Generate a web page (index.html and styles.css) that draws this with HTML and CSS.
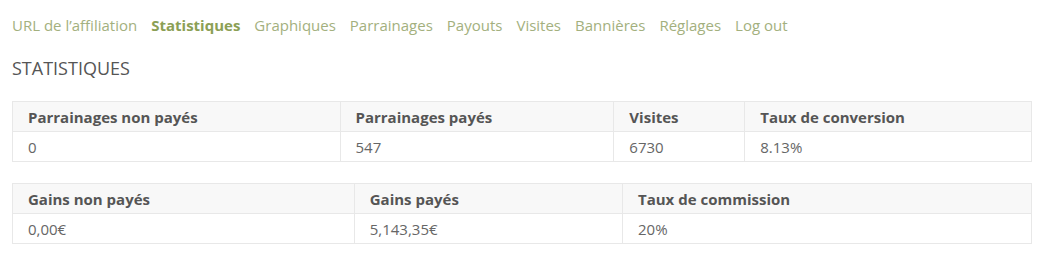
FILE: index.html
```html
<!DOCTYPE html>
<html lang="fr">
<head>
<meta charset="utf-8">
<link rel="stylesheet" href="styles.css">
</head>
<body>
<div class="page">
  <nav class="tabs">
    <a class="tab">URL de l’affiliation</a>
    <a class="tab active">Statistiques</a>
    <a class="tab">Graphiques</a>
    <a class="tab">Parrainages</a>
    <a class="tab">Payouts</a>
    <a class="tab">Visites</a>
    <a class="tab">Bannières</a>
    <a class="tab">Réglages</a>
    <a class="tab">Log out</a>
  </nav>
  <h4 class="title">STATISTIQUES</h4>
  <table class="stats">
    <thead>
      <tr><th>Parrainages non payés</th><th>Parrainages payés</th><th>Visites</th><th>Taux de conversion</th></tr>
    </thead>
    <tbody>
      <tr><td>0</td><td>547</td><td>6730</td><td>8.13%</td></tr>
    </tbody>
  </table>
  <table class="stats">
    <thead>
      <tr><th>Gains non payés</th><th>Gains payés</th><th>Taux de commission</th></tr>
    </thead>
    <tbody>
      <tr><td>0,00€</td><td>5,143,35€</td><td>20%</td></tr>
    </tbody>
  </table>
</div>
</body>
</html>
```
FILE: styles.css
```css
html, body {
  margin: 0;
  padding: 0;
  background: #ffffff;
}
body {
  font-family: "Open Sans", "DejaVu Sans", sans-serif;
  color: #666666;
}
.page {
  padding: 14px 10px 0 12px;
}
.tabs {
  display: flex;
  gap: 14px;
  font-size: 15px;
  line-height: 22px;
}
.tab {
  color: #a3b07e;
  text-decoration: none;
}
.tab.active {
  color: #8b9f55;
  font-weight: 700;
}
.title {
  margin: 21px 0 22px;
  font-size: 18px;
  line-height: 22px;
  font-weight: 400;
  color: #555555;
}
.stats {
  width: 100%;
  border-collapse: collapse;
  margin-bottom: 21px;
  font-size: 15px;
}
.stats th, .stats td {
  border: 1px solid #e8e8e8;
  padding: 0 15px;
  height: 29px;
  text-align: left;
}
.stats th {
  background: #f8f8f8;
  color: #555555;
  font-weight: 700;
}
.stats td {
  color: #666666;
}
```
